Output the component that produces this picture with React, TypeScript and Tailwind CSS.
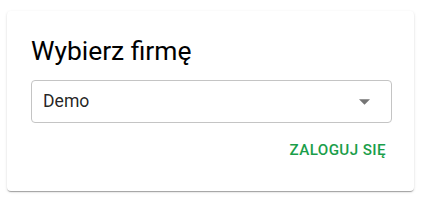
export default function App() {
  return (
    <div className="h-[202px] w-[423px] bg-white pl-[7px] pt-[11px] font-['Roboto',sans-serif]">
      <div className="flex h-[180px] w-[407px] flex-col rounded-[4px] bg-white pl-6 pr-[22px] pt-[23px] shadow-[0_2px_1px_-1px_rgba(0,0,0,0.2),0_1px_1px_0_rgba(0,0,0,0.14),0_1px_3px_0_rgba(0,0,0,0.12)]">
        <h1 className="text-[26.4px] leading-[35px] text-black">Wybierz firmę</h1>
        <div className="mt-[11px] flex h-[43px] items-center justify-between rounded-[4px] border border-[#c4c4c4] pl-[11px] pr-[21px]">
          <span className="text-[17.6px] text-[rgba(0,0,0,0.87)]">Demo</span>
          <svg width="11" height="6" viewBox="0 0 10 5" className="fill-[#757575]">
            <path d="M0 0l5 5 5-5z" />
          </svg>
        </div>
        <div className="mt-[11px] flex justify-end">
          <button className="px-[6px] py-[4px] text-[15.2px] font-medium uppercase leading-[24px] tracking-[0.4px] text-[#1a9e4a]">
            Zaloguj się
          </button>
        </div>
      </div>
    </div>
  );
}
